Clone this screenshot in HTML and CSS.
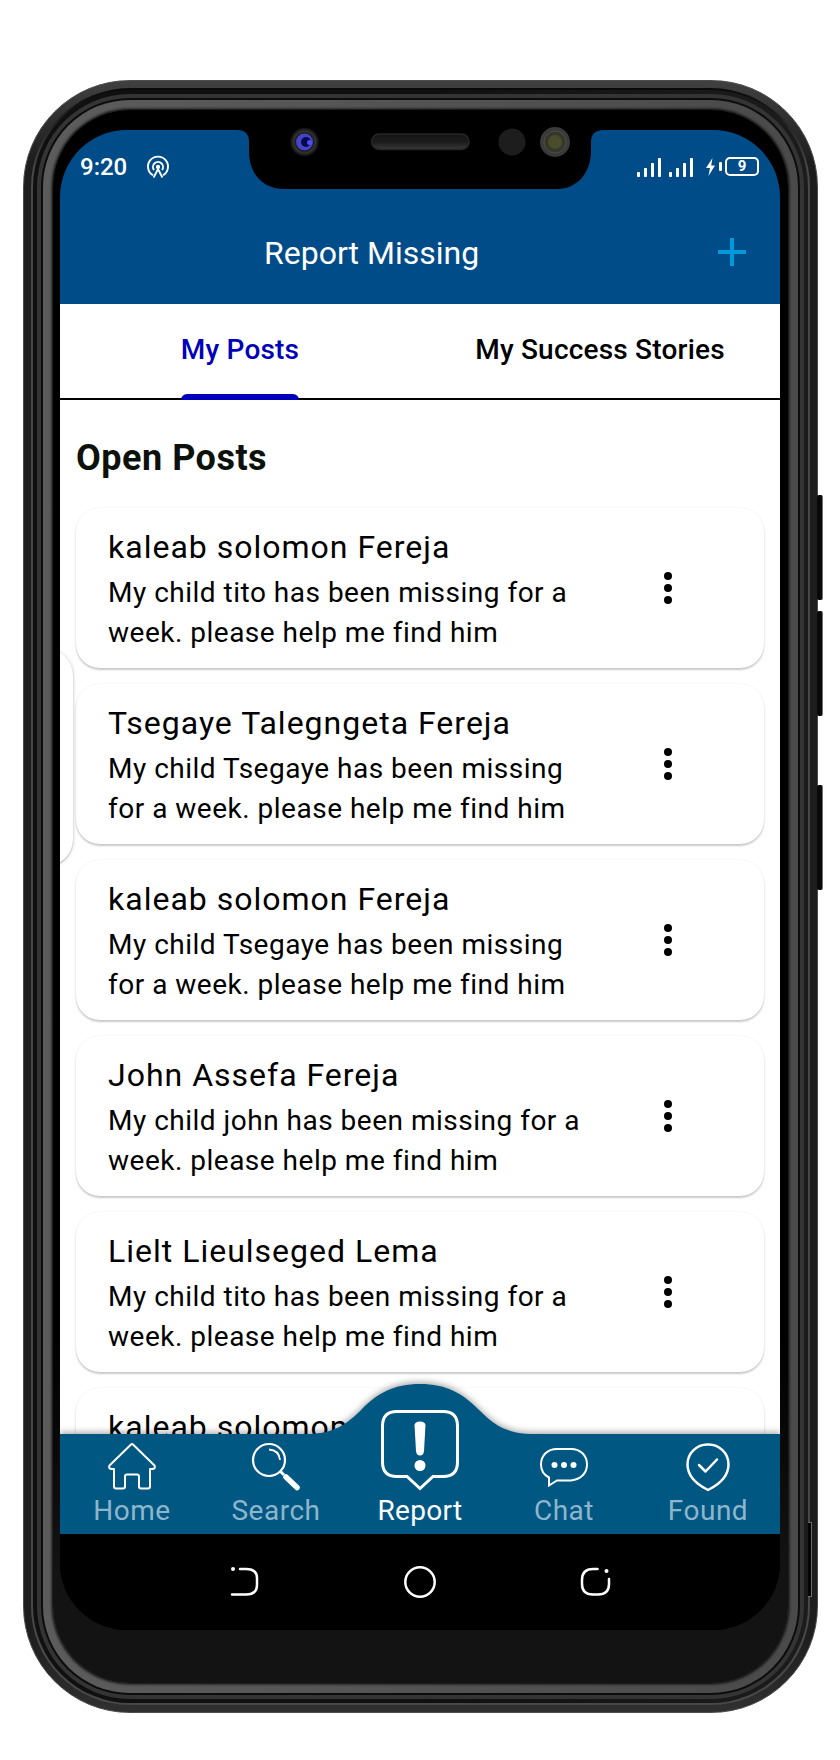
FILE: index.html
```html
<!DOCTYPE html>
<html lang="en">
<head>
<meta charset="utf-8">
<title>Report Missing</title>
<link rel="stylesheet" href="styles.css">
</head>
<body>
<main class="stage">
  <span class="side-key key-a"></span>
  <span class="side-key key-b"></span>
  <span class="side-key key-c"></span>
  <div class="rim">
  <div class="rim-ridge">
  <div class="rim-groove">
  <div class="rim-band">
  <div class="rim-line">
  <div class="rim-inner">
  <div class="glass">
    <div class="screen">
      <header class="header">
        <div class="status">
          <div class="status-left">
            <span class="clock">9:20</span>
            <svg class="cast" width="24" height="24" viewBox="0 0 24 24" fill="none" stroke="#fff" stroke-width="1.9"><path d="M7 20.3A10 10 0 1 1 17 20.3"/><path d="M8 15A5 5 0 1 1 16 15"/><path d="M7.6 22.5L12 14L16.4 22.5"/><circle cx="12" cy="12" r="1.2" fill="#fff"/></svg>
          </div>
          <div class="status-right">
            <svg width="24" height="20" viewBox="0 0 24 20" fill="#fff"><rect x="0" y="15" width="3" height="5" rx=".8"/><rect x="7" y="11" width="3" height="9" rx=".8"/><rect x="14" y="6" width="3" height="14" rx=".8"/><rect x="21" y="1" width="3" height="19" rx=".8"/></svg>
            <svg class="signal-two" width="24" height="20" viewBox="0 0 24 20" fill="#fff"><rect x="0" y="15" width="3" height="5" rx=".8"/><rect x="7" y="11" width="3" height="9" rx=".8"/><rect x="14" y="6" width="3" height="14" rx=".8"/><rect x="21" y="1" width="3" height="19" rx=".8"/></svg>
            <svg class="bolt" width="9" height="18" viewBox="0 0 9 18" fill="#fff"><path d="M6.5 0L0 10H4L2.5 18L9 7.5H5.2Z"/></svg>
            <span class="battery-tip"></span>
            <span class="battery">9</span>
          </div>
        </div>
        <div class="appbar">
          <h1 class="title">Report Missing</h1>
          <svg class="plus" width="28" height="28" viewBox="0 0 28 28" fill="#0099da"><path d="M12 0h4v12h12v4H16v12h-4V16H0v-4h12z"/></svg>
        </div>
      </header>
      <nav class="tabs">
        <div class="tab tab-active"><span class="tab-label">My Posts</span></div>
        <div class="tab"><span class="tab-label">My Success Stories</span></div>
      </nav>
      <section class="feed">
        <h2 class="heading">Open Posts</h2>
        <article class="card"><div class="copy"><h3>kaleab solomon Fereja</h3><p>My child tito has been missing for a<br>week. please help me find him</p></div><svg class="more" width="8" height="32" viewBox="0 0 8 32"><circle cx="4" cy="4" r="4"/><circle cx="4" cy="16" r="4"/><circle cx="4" cy="28" r="4"/></svg></article>
        <article class="card"><div class="copy"><h3>Tsegaye Talegngeta Fereja</h3><p>My child Tsegaye has been missing<br>for a week. please help me find him</p></div><svg class="more" width="8" height="32" viewBox="0 0 8 32"><circle cx="4" cy="4" r="4"/><circle cx="4" cy="16" r="4"/><circle cx="4" cy="28" r="4"/></svg></article>
        <article class="card"><div class="copy"><h3>kaleab solomon Fereja</h3><p>My child Tsegaye has been missing<br>for a week. please help me find him</p></div><svg class="more" width="8" height="32" viewBox="0 0 8 32"><circle cx="4" cy="4" r="4"/><circle cx="4" cy="16" r="4"/><circle cx="4" cy="28" r="4"/></svg></article>
        <article class="card"><div class="copy"><h3>John Assefa Fereja</h3><p>My child john has been missing for a<br>week. please help me find him</p></div><svg class="more" width="8" height="32" viewBox="0 0 8 32"><circle cx="4" cy="4" r="4"/><circle cx="4" cy="16" r="4"/><circle cx="4" cy="28" r="4"/></svg></article>
        <article class="card"><div class="copy"><h3>Lielt Lieulseged Lema</h3><p>My child tito has been missing for a<br>week. please help me find him</p></div><svg class="more" width="8" height="32" viewBox="0 0 8 32"><circle cx="4" cy="4" r="4"/><circle cx="4" cy="16" r="4"/><circle cx="4" cy="28" r="4"/></svg></article>
        <article class="card"><div class="copy"><h3>kaleab solomon</h3></div></article>
        <span class="edge-handle"></span>
      </section>
      <nav class="tabbar">
        <svg class="hump" width="720" height="51" viewBox="0 0 720 51"><path d="M0 50H250C274 49 286 41 302 25C318 9 334 0 360 0C386 0 402 9 418 25C434 41 446 49 470 50H720V60H0Z" fill="#005782"/></svg>
        <a class="item"><svg width="50" height="50" viewBox="0 0 50 50" fill="none" stroke="#fff" stroke-width="2" stroke-linejoin="round"><path d="M24 2.500Q25 1.500 26 2.500L47.500 23.500Q49 27 45 27H43V44.500Q43 46.500 41 46.500H34Q32 46.500 32 44.500V34.500Q32 32.500 30 32.500H20Q18 32.500 18 34.500V44.500Q18 46.500 16 46.500H9Q7 46.500 7 44.500V27H5Q1 27 2.500 23.500Z"/></svg><span>Home</span></a>
        <a class="item"><svg width="50" height="50" viewBox="0 0 50 50" fill="none" stroke="#fff"><circle cx="18" cy="18" r="16" stroke-width="2.200"/><path d="M18 7.500Q28 8 29 18" stroke-width="1.800"/><path d="M29 29L33 33" stroke-width="3"/><path d="M35 35L46 45.500" stroke-width="5.500" stroke-linecap="round"/></svg><span>Search</span></a>
        <a class="item item-active"><svg class="report-icon" width="80" height="82" viewBox="0 0 80 82"><path d="M17 2.500H63Q77.500 2.500 77.500 17V53Q77.500 67.500 63 67.500H53L40 79.500L27 67.500H17Q2.500 67.500 2.500 53V17Q2.500 2.500 17 2.500Z" fill="none" stroke="#fff" stroke-width="3"/><path d="M34.500 16Q35 12.500 40 12.500T45.500 16L44 42Q43.500 46.500 40 46.500T36 42Z" fill="#fff"/><circle cx="40" cy="56.500" r="5.500" fill="#fff"/></svg><span>Report</span></a>
        <a class="item"><svg width="50" height="50" viewBox="0 0 50 50" fill="none" stroke="#fff" stroke-width="2"><path d="M18 7H32C42 7 48 14 48 22.500C48 31 42 37.500 32 38.500H18L10 43.500V35.500C5 33 2 29 2 22.500C2 14 8 7 18 7Z"/><g fill="#fff" stroke="none"><circle cx="15.500" cy="23" r="3"/><circle cx="25" cy="23" r="3"/><circle cx="34.500" cy="23" r="3"/></g></svg><span>Chat</span></a>
        <a class="item"><svg width="50" height="50" viewBox="0 0 50 50" fill="none" stroke="#fff" stroke-width="2.500" stroke-linejoin="round"><path d="M25 2.500A20 20 0 0 0 4.500 22.500C4.500 35 14 42.500 25 48C36 42.500 45.500 35 45.500 22.500A20 20 0 0 0 25 2.500Z"/><path d="M16 23L22.500 29.500L34 17.500" stroke-linecap="round"/></svg><span>Found</span></a>
      </nav>
      <footer class="sysbar">
        <svg width="32" height="32" viewBox="0 0 32 32" fill="none" stroke="#fff" stroke-width="2.500" stroke-linecap="round"><path d="M12 3H18Q29 3 29 12V19Q29 28.500 18 28.500H4"/><circle cx="5" cy="3" r="2" fill="#fff" stroke="none"/></svg>
        <svg width="32" height="32" viewBox="0 0 32 32" fill="none" stroke="#fff" stroke-width="2.500"><circle cx="16" cy="16" r="14.700"/></svg>
        <svg width="32" height="32" viewBox="0 0 32 32" fill="none" stroke="#fff" stroke-width="2.500" stroke-linecap="round"><path d="M17.500 3H13Q2 3 2 14V18Q2 28.500 13 28.500H18Q29 28.500 29 18V13"/><circle cx="26.500" cy="5" r="2" fill="#fff" stroke="none"/></svg>
      </footer>
    </div>
    <div class="notch">
      <svg width="368" height="62" viewBox="0 0 368 62"><defs><linearGradient id="grille" x2="0" y2="1"><stop stop-color="#161616"/><stop offset=".5" stop-color="#1b1b1b"/><stop offset="1" stop-color="#383838"/></linearGradient><radialGradient id="lens"><stop offset=".5" stop-color="#08080c"/><stop offset=".75" stop-color="#333"/><stop offset="1" stop-color="#080808"/></radialGradient></defs><path d="M0 3Q12 3 12 15V24C12 48 27 62 47 62H320C340 62 354 46 354 24V15Q354 3 367 3V0H0Z"/><circle cx="67.500" cy="15" r="14.500" fill="url(#lens)"/><circle cx="67.500" cy="15" r="8.500" fill="#4545c8"/><circle cx="69" cy="15" r="5" fill="#08084a"/><circle cx="72.500" cy="15.500" r="2.500" fill="#4f4fff"/><rect x="134.500" y="7" width="97.500" height="15.500" rx="7.700" fill="url(#grille)" stroke="#262626" stroke-width="1.500"/><circle cx="275" cy="15" r="13.500" fill="#1d1d1d"/><circle cx="318" cy="15" r="15" fill="#3a3b38"/><circle cx="318" cy="15" r="11" fill="#35372c" stroke="#4e4f44"/><circle cx="318" cy="15" r="7" fill="#4b4c2a"/></svg>
    </div>
  </div>
  </div></div></div></div></div></div>
  <span class="sim-slot"></span>
</main>
</body>
</html>
```
FILE: styles.css
```css
* { box-sizing: border-box; }
body { margin: 0; background: #fff; font-family: Roboto, sans-serif; color: #000; }
h1, h2, h3, p { margin: 0; font-weight: 400; }
svg { display: block; flex: none; }

/* Device body: nested rims, outermost first */
.stage { position: relative; width: 840px; height: 1760px; padding: 80px 22.500px 47px 23px; }
.rim { height: 1633px; padding: 7px; border-radius: 107px; background: linear-gradient(#404040, #1d1d1d 5%, #1d1d1d 95%, #303030); border: 1px solid #4c4c4c; }
.rim-ridge { height: 100%; padding: 2px; border-radius: 99px; background: linear-gradient(#080808, #484848 5%); }
.rim-groove { height: 100%; padding: 4px; border-radius: 97px; background: linear-gradient(90deg, #101010 50%, #1c1c1c); }
.rim-band { height: 100%; padding: 4px; border-radius: 93px; background: #343434; }
.rim-line { height: 100%; padding: 2px; border-radius: 89px; background: #0c0c0c; }
.rim-inner { height: 100%; padding: 10px; border-radius: 87px; background: linear-gradient(90deg, #5c5c5c, #4a4a4a); }
.glass { position: relative; height: 100%; padding: 20px 7px 0; border-radius: 77px; background: linear-gradient(#000 78%, #131313 93%); box-shadow: 0 0 3px 1px #000; }
.screen { display: flex; flex-direction: column; width: 720px; height: 1500px; overflow: hidden; border-radius: 67px; background: #000; }
.side-key { position: absolute; left: 817px; width: 6px; height: 105px; border-radius: 2px; background: #090909; border-right: 1px solid #776f70; }
.key-a { top: 495px; }
.key-b { top: 611px; }
.key-c { top: 785px; }
.sim-slot { position: absolute; left: 808px; top: 1522px; width: 4px; height: 75px; background: #050505; border: solid #6b6b6b; border-width: 1px 1px 1px 0; }
.notch { position: absolute; left: 184px; top: 17px; }

/* Header */
.header { flex: none; height: 174px; background: #004c89; color: #fff; }
.status { display: flex; justify-content: space-between; align-items: center; height: 73px; padding: 0 21px 0 20px; }
.status-left, .status-right { display: flex; align-items: center; }
.clock { font-size: 24px; font-weight: 500; line-height: 28px; }
.cast { margin-left: 19px; }
.signal-two { margin-left: 8px; }
.bolt { margin-left: 13px; }
.battery-tip { width: 3px; height: 9px; margin: 0 3px 0 4px; border-radius: 1px; background: #fff; }
.battery { width: 34px; height: 19px; border: 2px solid #fff; border-radius: 5px; font-size: 15px; font-weight: 700; line-height: 15px; text-align: center; }
.appbar { display: flex; justify-content: space-between; align-items: center; height: 98px; padding: 0 34px 0 204px; }
.title { font-size: 32px; line-height: 40px; padding-top: 2px; }

/* Tabs */
.tabs { display: flex; flex: none; height: 96px; border-bottom: 2px solid #000; background: #fff; }
.tab { display: flex; justify-content: center; width: 360px; height: 96px; font-size: 28px; font-weight: 500; letter-spacing: .2px; }
.tab-label { display: flex; flex-direction: column; justify-content: space-between; height: 96px; line-height: 90px; padding-top: 1px; }
.tab-active .tab-label { color: #0000ba; }
.tab-active .tab-label::after { content: ""; flex: none; width: 100%; height: 6px; border-radius: 6px 6px 0 0; background: #0000ba; margin-top: -2px; }

/* Feed */
.feed { position: relative; flex: 1; min-height: 0; padding: 35px 16px 0; overflow: hidden; background: #fff; }
.heading { height: 73px; color: #0d110b; font-size: 36px; font-weight: 700; line-height: 46px; letter-spacing: .5px; }
.card { display: flex; align-items: center; justify-content: space-between; width: 688px; height: 160px; margin-bottom: 16px; padding: 0 92px 0 32px; border-radius: 24px; background: #fff; box-shadow: 0 2px 2px rgba(0,0,0,.2), 0 0 2px rgba(0,0,0,.08); }
.copy { align-self: flex-start; padding-top: 18px; }
.copy h3 { font-size: 32px; line-height: 42px; letter-spacing: 1px; white-space: nowrap; }
.copy p { padding-top: 5px; font-size: 28px; line-height: 40px; letter-spacing: .5px; white-space: nowrap; }
.edge-handle { position: absolute; left: -40px; top: 249px; width: 53px; height: 217px; border-radius: 30px; background: #fff; box-shadow: 0 1px 2px rgba(0,0,0,.28), 0 0 5px rgba(0,0,0,.12); }

/* Bottom navigation */
.tabbar { position: relative; display: flex; flex: none; height: 100px; background: #005782; }
.hump { position: absolute; left: 0; bottom: 99px; filter: drop-shadow(0 -2px 3px rgba(0,0,0,.32)); overflow: visible; clip-path: inset(-12px 0 0 0); }
.item { position: relative; display: flex; flex-direction: column; align-items: center; justify-content: flex-end; width: 144px; height: 100px; color: #8db6cc; font-size: 28px; line-height: 32px; letter-spacing: .5px; padding-bottom: 7px; gap: 3px; }
.item-active { color: #fff; letter-spacing: .3px; }
.report-icon { margin-bottom: 1px; }

/* System navigation */
.sysbar { display: flex; flex: none; align-items: center; justify-content: space-between; height: 96px; padding: 0 168px; background: #000; }
.sysbar svg { overflow: visible; }
```
